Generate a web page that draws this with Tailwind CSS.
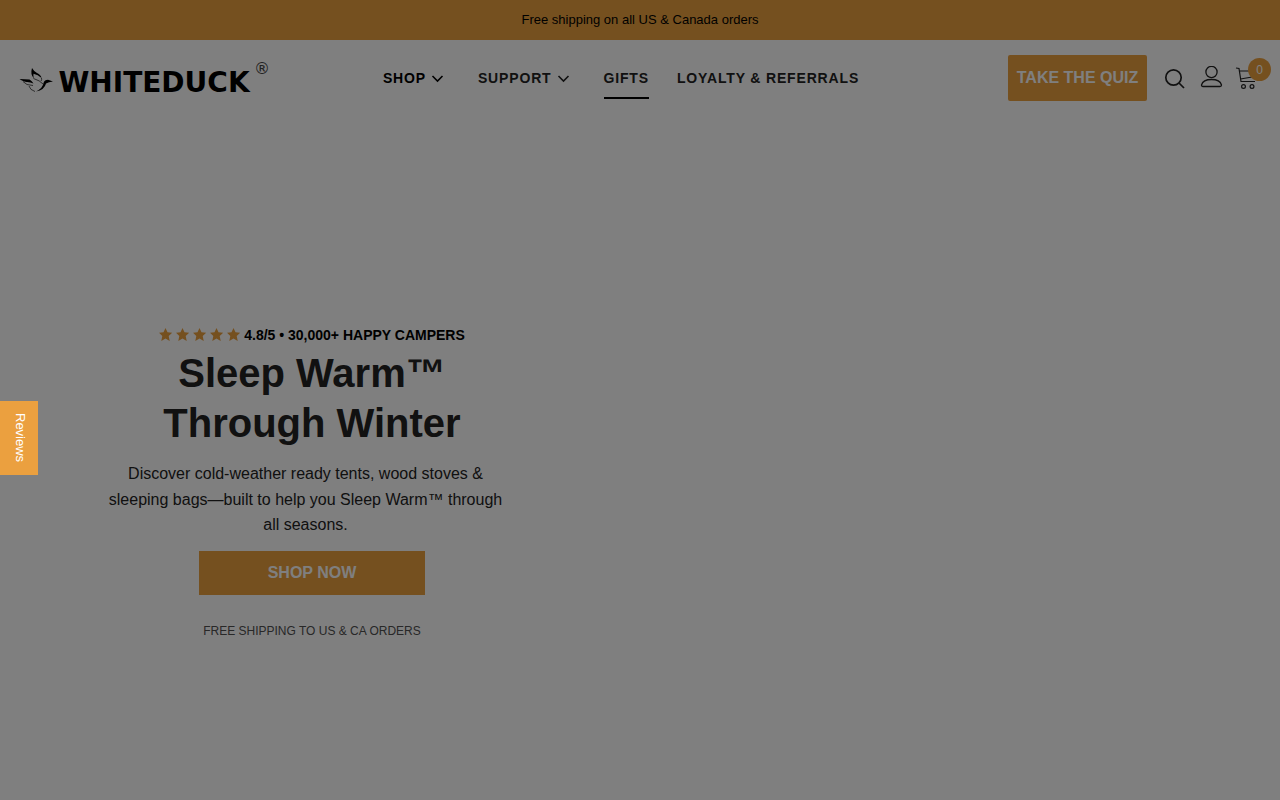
<!DOCTYPE html>
<html lang="en">
<head>
  <meta charset="UTF-8" />
  <meta name="viewport" content="width=device-width, initial-scale=1.0" />
  <title>White Duck Outdoors</title>
  <script src="https://cdn.jsdelivr.net/npm/@tailwindcss/browser@4"></script>
</head>
<body class="bg-white text-[#232323] font-['Liberation_Sans',Arial,sans-serif]">

  <!-- Announcement bar -->
  <div class="flex h-10 items-center justify-center bg-[#eba03f] text-[13px] text-black">
    <p>Free shipping on all US &amp; Canada orders</p>
  </div>

  <!-- Header -->
  <header class="flex h-[76px] items-center justify-between pl-[18px] pr-[9px]">
    <a href="#" aria-label="Whiteduck home" class="flex h-8 w-[252px] shrink-0 items-start justify-between font-['DejaVu_Sans',sans-serif] text-black">
      <svg class="h-8 w-9 shrink-0" viewBox="0 0 36 32" fill="currentColor">
        <path d="M1.500 17 L11.500 17.500 Q14 19 15.500 21.500 Q12 19.800 8.500 20 Q6 19.500 4.500 18.800 Q3 18.200 1.500 17Z" />
        <path d="M14 6 Q16 9.500 19 11 Q23 13 23.500 16 Q20 12.500 15.500 11.800 Q15 14 16 16.500 Q12 12.500 14 6Z" />
        <path d="M25.500 21 Q26.500 17.800 30 17.800 L35 19.500 Q30.500 19.800 28 21.500 Q26.500 28 18 29.500 Q25 26 25.500 21Z" />
        <path d="M15.500 16.500 Q22 18.500 25 22 M5 19.500 Q8 23.500 15 23.500 M11 24 Q12 28 17 29.500 M23.500 16 Q24 18 23 19" fill="none" stroke="#333" stroke-width=".8" />
      </svg>
      <span class="text-[28px] leading-[42px] font-bold">WHITEDUCK</span>
      <span class="text-base leading-[14px] text-[#444]">®</span>
    </a>

    <nav class="mr-9 flex items-center gap-7 text-sm font-bold tracking-[0.06em]">
      <a href="#" class="flex h-[42px] items-center gap-1 text-black">SHOP
        <svg class="mr-1 size-4" viewBox="0 0 16 16" fill="none" stroke="currentColor" stroke-width="1.600"><path d="M2.500 6 L7.500 11 L12.500 6" /></svg>
      </a>
      <a href="#" class="flex h-[42px] items-center gap-1">SUPPORT
        <svg class="mr-1 size-4" viewBox="0 0 16 16" fill="none" stroke="currentColor" stroke-width="1.600"><path d="M2.500 6 L7.500 11 L12.500 6" /></svg>
      </a>
      <a href="#" class="flex h-[42px] items-center border-y-2 border-t-transparent border-b-black">GIFTS</a>
      <a href="#" class="flex h-[42px] items-center">LOYALTY &amp; REFERRALS</a>
    </nav>

    <div class="flex items-center">
      <a href="#" class="flex h-[46px] w-[139px] items-center justify-center rounded-xs bg-[#eba03f] font-bold text-white">TAKE THE QUIZ</a>
      <button type="button" aria-label="Search" class="ml-[17px]">
        <svg class="size-[22px]" viewBox="0 0 22 22" fill="none" stroke="currentColor" stroke-width="1.700"><circle cx="9.500" cy="10.500" r="7.700" /><path d="M15 16 L20 21" /></svg>
      </button>
      <a href="#" aria-label="Account" class="ml-[14px]">
        <svg class="h-6 w-[23px]" viewBox="0 0 23 24" fill="none" stroke="currentColor" stroke-width="1.300"><circle cx="11.500" cy="6" r="5.600" /><path d="M3 20.500 Q1.500 20.500 1.500 19 Q3 13.500 11.500 13.500 T21.500 19 Q21.500 20.500 20 20.500Z" /></svg>
      </a>
      <a href="#" aria-label="Cart" class="relative ml-3 w-9">
        <svg class="size-6" viewBox="0 0 24 24" fill="none" stroke="currentColor" stroke-width="1.200"><path d="M1 2 L4 2.500 L6 15.500 H20 M4.500 5 H20 M5.500 13 L20 10.500" /><circle cx="8.500" cy="20.500" r="1.900" /><circle cx="17" cy="20.500" r="1.900" /></svg>
        <span class="absolute -top-2 right-0 flex size-[23px] items-center justify-center rounded-full bg-[#eba03f] text-xs text-white">0</span>
      </a>
    </div>
  </header>

  <!-- Hero -->
  <main class="grid grid-cols-2 pt-[209px]">
    <section class="flex flex-col items-center pl-4 pr-8 text-center">
      <div class="flex items-center gap-[3px] text-sm font-bold text-black">
        <span class="flex gap-[3px] text-[#eba03f]" role="img" aria-label="5 stars">
          <svg class="size-[14px]" viewBox="0 0 14 14" fill="currentColor"><path d="M6.500 0 L8.500 4.300 L13.200 4.800 L9.700 8.100 L10.700 13 L6.500 10.600 L2.300 13 L3.300 8.100 L0 4.800 L4.500 4.300Z" /></svg>
          <svg class="size-[14px]" viewBox="0 0 14 14" fill="currentColor"><path d="M6.500 0 L8.500 4.300 L13.200 4.800 L9.700 8.100 L10.700 13 L6.500 10.600 L2.300 13 L3.300 8.100 L0 4.800 L4.500 4.300Z" /></svg>
          <svg class="size-[14px]" viewBox="0 0 14 14" fill="currentColor"><path d="M6.500 0 L8.500 4.300 L13.200 4.800 L9.700 8.100 L10.700 13 L6.500 10.600 L2.300 13 L3.300 8.100 L0 4.800 L4.500 4.300Z" /></svg>
          <svg class="size-[14px]" viewBox="0 0 14 14" fill="currentColor"><path d="M6.500 0 L8.500 4.300 L13.200 4.800 L9.700 8.100 L10.700 13 L6.500 10.600 L2.300 13 L3.300 8.100 L0 4.800 L4.500 4.300Z" /></svg>
          <svg class="size-[14px]" viewBox="0 0 14 14" fill="currentColor"><path d="M6.500 0 L8.500 4.300 L13.200 4.800 L9.700 8.100 L10.700 13 L6.500 10.600 L2.300 13 L3.300 8.100 L0 4.800 L4.500 4.300Z" /></svg>
        </span>
        <span>4.8/5 • 30,000+ HAPPY CAMPERS</span>
      </div>
      <h1 class="mt-[3px] text-[40px] leading-[50px] font-bold">Sleep Warm™<br />Through Winter</h1>
      <p class="mt-[13px] mr-[13px] max-w-[400px] leading-[1.6]">Discover cold-weather ready tents, wood stoves &amp; sleeping bags—built to help you Sleep Warm™ through all seasons.</p>
      <a href="#" class="mt-[13px] flex h-11 w-[226px] items-center justify-center bg-[#eba03f] font-bold text-white">SHOP NOW</a>
      <p class="mt-7 text-xs text-[#505050]">FREE SHIPPING TO US &amp; CA ORDERS</p>
    </section>
  </main>

  <!-- Page dimmer -->
  <div class="pointer-events-none fixed inset-0 z-10 bg-black/50"></div>

  <!-- Reviews tab -->
  <button type="button" class="fixed top-[401px] left-0 z-20 flex h-[74px] w-[38px] items-center justify-center bg-[#eba03f] pl-0.5 text-[13px] text-white [writing-mode:vertical-rl]">Reviews</button>
</body>
</html>
